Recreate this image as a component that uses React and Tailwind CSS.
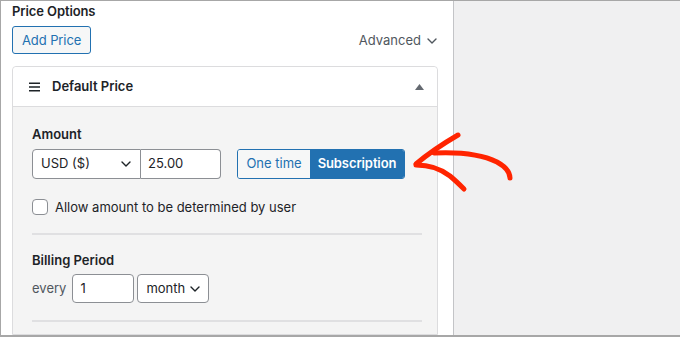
import React from "react";

function Chevron({ className = "" }) {
  return (
    <svg className={className} width="10" height="6" viewBox="0 0 10 6" fill="none">
      <path d="M1 1l4 4 4-4" stroke="currentColor" strokeWidth="1.4" strokeLinecap="round" strokeLinejoin="round" />
    </svg>
  );
}

export default function App() {
  return (
    <div className="relative w-[680px] h-[337px] overflow-hidden bg-white border-t border-l border-b-2 border-[#a7a7a7] flex text-[13px] text-[#1d2327] font-['Inter','Noto_Sans',sans-serif]">
      <div className="w-[452px] shrink-0 pl-[11px] pr-[15px] flex flex-col">
        <div className="pt-[1px] leading-[18px] font-semibold text-[13px] tracking-[-0.1px]">Price Options</div>
        <div className="mt-[6px] flex items-center justify-between">
          <button className="h-[28px] px-[9px] border border-[#2271b1] rounded-[3px] bg-[#f6f7f7] text-[#2271b1] leading-none tracking-[-0.1px]">
            Add Price
          </button>
          <div className="flex items-center gap-[6px] text-[#50575e] mr-[1px] mt-[1px]">
            <span>Advanced</span>
            <Chevron className="text-[#50575e]" />
          </div>
        </div>
        <div className="mt-[12px] border border-[#dcdcde] rounded-t-[4px] flex flex-col flex-1">
          <div className="h-[40px] flex items-center pl-[16px] pr-[13px] border-b border-[#dcdcde] bg-white rounded-t-[4px]">
            <svg width="11" height="10" viewBox="0 0 11 10" className="text-[#1d2327]">
              <rect x="0" y="0.5" width="11" height="1.5" fill="currentColor" />
              <rect x="0" y="4.25" width="11" height="1.5" fill="currentColor" />
              <rect x="0" y="8" width="11" height="1.5" fill="currentColor" />
            </svg>
            <span className="ml-[12px] font-semibold">Default Price</span>
            <svg className="ml-auto text-[#646970]" width="9" height="6" viewBox="0 0 9 6">
              <path d="M4.5 0L9 6H0z" fill="currentColor" />
            </svg>
          </div>
          <div className="flex-1 bg-[#f4f4f4] pl-[19px] pr-[15px] pt-[18px]">
            <div className="leading-[18px] font-semibold">Amount</div>
            <div className="mt-[6px] flex items-center">
              <div className="flex h-[30px]">
                <div className="w-[109px] h-full border border-[#8c8f94] rounded-l-[4px] bg-white flex items-center pl-[8px] pr-[9px]">
                  <span>USD ($)</span>
                  <Chevron className="ml-auto text-[#1d2327]" />
                </div>
                <div className="w-[80px] h-full border border-l-0 border-[#8c8f94] rounded-r-[4px] bg-white flex items-center pl-[7px]">
                  25.00
                </div>
              </div>
              <div className="ml-[16px] flex h-[30px] rounded-[3px] border border-[#2271b1] overflow-hidden">
                <div className="w-[72px] bg-[#f6f7f7] text-[#2271b1] flex items-center justify-center">One time</div>
                <div className="w-[94px] bg-[#2271b1] text-white font-semibold flex items-center justify-center tracking-[-0.1px]">Subscription</div>
              </div>
            </div>
            <div className="mt-[20px] flex items-center">
              <div className="w-[16px] h-[16px] border border-[#8c8f94] rounded-[4px] bg-white" />
              <span className="ml-[7px] leading-[16px]">Allow amount to be determined by user</span>
            </div>
            <div className="mt-[18px] h-[2px] bg-[#e0e0e2]" />
            <div className="mt-[16px] leading-[18px] font-semibold">Billing Period</div>
            <div className="mt-[5px] flex items-center">
              <span className="text-[#50575e]">every</span>
              <div className="ml-[6px] w-[62px] h-[29px] border border-[#8c8f94] rounded-[4px] bg-white flex items-center pl-[7px]">1</div>
              <div className="ml-[3px] w-[72px] h-[29px] border border-[#8c8f94] rounded-[4px] bg-white flex items-center pl-[8px] pr-[8px]">
                <span>month</span>
                <Chevron className="ml-auto" />
              </div>
            </div>
            <div className="mt-[17px] h-[2px] bg-[#e0e0e2]" />
          </div>
        </div>
      </div>
      <div className="flex-1 bg-[#f0f0f1] border-l border-[#c3c4c7]" />
      <svg className="absolute left-0 top-0 pointer-events-none" width="680" height="337" viewBox="0 0 680 337" fill="none">
        <g stroke="#ff2400" strokeWidth="5" strokeLinecap="round" strokeLinejoin="round">
          <path d="M457 134 C 445 141, 428 152, 415 163" />
          <path d="M433 152 C 455 151, 480 153, 496 161 C 505 166, 509 172, 509 177" />
          <path d="M415 164 C 428 164, 440 168, 449 175 C 455 180, 460 185, 463 188" />
        </g>
      </svg>
    </div>
  );
}
